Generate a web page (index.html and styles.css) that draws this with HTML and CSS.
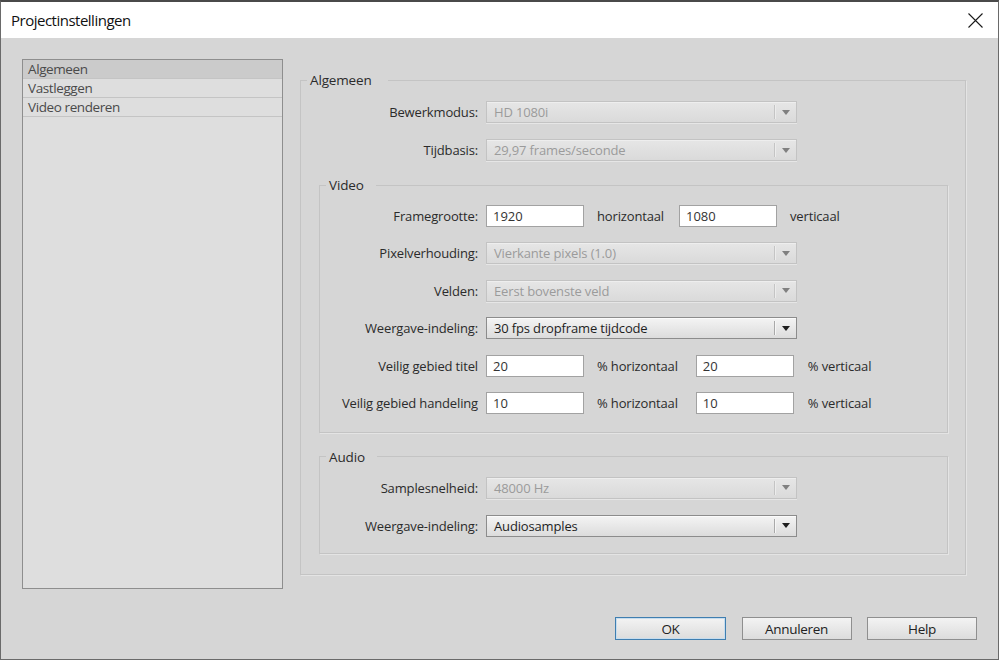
FILE: index.html
```html
<!DOCTYPE html>
<html lang="nl">
<head>
<meta charset="utf-8">
<title>Projectinstellingen</title>
<link rel="stylesheet" href="styles.css">
</head>
<body>
<div class="window">
  <div class="titlebar">
    <span class="title">Projectinstellingen</span>
    <button class="close" aria-label="Sluiten">
      <svg width="15" height="15" viewBox="0 0 15 15"><path d="M0.5 0.5 L14.5 14.5 M14.5 0.5 L0.5 14.5" stroke="#1a1a1a" stroke-width="1.1" fill="none"/></svg>
    </button>
  </div>
  <div class="body">
    <div class="content">
      <ul class="nav">
        <li class="sel">Algemeen</li>
        <li>Vastleggen</li>
        <li>Video renderen</li>
      </ul>
      <fieldset class="group main">
        <legend>Algemeen</legend>
        <div class="inner">
          <div class="rows top">
            <div class="row"><span class="lbl">Bewerkmodus:</span><div class="select disabled"><span class="val">HD 1080i</span><span class="btn"><i class="arrow"></i></span></div></div>
            <div class="row"><span class="lbl">Tijdbasis:</span><div class="select disabled"><span class="val">29,97 frames/seconde</span><span class="btn"><i class="arrow"></i></span></div></div>
          </div>
          <fieldset class="group sub video">
            <legend>Video</legend>
            <div class="sub-inner">
              <div class="rows vrows">
                <div class="row"><span class="lbl">Framegrootte:</span><input class="field" value="1920"><span class="unit">horizontaal</span><input class="field f2" value="1080"><span class="unit">verticaal</span></div>
                <div class="row"><span class="lbl">Pixelverhouding:</span><div class="select disabled"><span class="val">Vierkante pixels (1.0)</span><span class="btn"><i class="arrow"></i></span></div></div>
                <div class="row"><span class="lbl">Velden:</span><div class="select disabled"><span class="val">Eerst bovenste veld</span><span class="btn"><i class="arrow"></i></span></div></div>
                <div class="row"><span class="lbl">Weergave-indeling:</span><div class="select"><span class="val">30 fps dropframe tijdcode</span><span class="btn"><i class="arrow"></i></span></div></div>
                <div class="row"><span class="lbl">Veilig gebied titel</span><input class="field" value="20"><span class="unit">% horizontaal</span><input class="field f3" value="20"><span class="unit">% verticaal</span></div>
                <div class="row"><span class="lbl">Veilig gebied handeling</span><input class="field" value="10"><span class="unit">% horizontaal</span><input class="field f3" value="10"><span class="unit">% verticaal</span></div>
              </div>
            </div>
          </fieldset>
          <fieldset class="group sub audio">
            <legend>Audio</legend>
            <div class="sub-inner">
              <div class="rows arows">
                <div class="row"><span class="lbl">Samplesnelheid:</span><div class="select disabled"><span class="val">48000 Hz</span><span class="btn"><i class="arrow"></i></span></div></div>
                <div class="row"><span class="lbl">Weergave-indeling:</span><div class="select"><span class="val">Audiosamples</span><span class="btn"><i class="arrow"></i></span></div></div>
              </div>
            </div>
          </fieldset>
        </div>
      </fieldset>
    </div>
    <div class="buttons">
      <button class="button default">OK</button>
      <button class="button">Annuleren</button>
      <button class="button">Help</button>
    </div>
  </div>
</div>
</body>
</html>
```
FILE: styles.css
```css
* { box-sizing: border-box; }
html, body { margin: 0; padding: 0; }
body {
  width: 999px;
  height: 660px;
  overflow: hidden;
  background: #3c3c3c;
  font-family: "Open Sans", "Noto Sans", sans-serif;
  font-size: 13px;
  letter-spacing: -0.15px;
  color: #2b2b2b;
}
.window {
  width: 999px;
  height: 660px;
  border: 1px solid #6a6a6a;
  border-top: 2px solid #4a4a4a;
  background: #d6d6d6;
  display: flex;
  flex-direction: column;
}
.titlebar {
  flex: none;
  height: 36px;
  background: #fff;
  display: flex;
  align-items: center;
  justify-content: space-between;
  padding: 0 15px 0 10px;
}
.title { font-size: 15px; letter-spacing: -0.5px; color: #111; }
.close {
  border: 0;
  background: none;
  padding: 0;
  width: 15px;
  height: 15px;
  display: flex;
}
.body {
  flex: 1;
  padding: 21px 21px 0 21px;
  display: flex;
  flex-direction: column;
}
.content {
  display: flex;
  align-items: flex-start;
  gap: 17px;
  height: 530px;
}
.nav {
  flex: none;
  width: 261px;
  height: 530px;
  margin: 0;
  padding: 0;
  list-style: none;
  border: 1px solid #8e8e8e;
  background: #dedede;
}
.nav li {
  height: 19px;
  line-height: 18px;
  padding-left: 5px;
  border-bottom: 1px solid #c4c4c4;
  color: #4a4a4a;
  font-size: 13.5px;
  letter-spacing: -0.4px;
}
.nav li.sel { background: #cbcbcb; }

.group {
  margin: 0;
  padding: 0;
  min-width: 0;
  border: 1px solid #c4c4c4;
  box-shadow: 1px 1px 0 #e4e4e4;
}
.group > legend {
  margin-left: 6px;
  padding: 0 12px 0 3px;
  line-height: 18px;
  font-size: 13.5px;
  color: #2b2b2b;
}
.main {
  flex: none;
  width: 666px;
  margin-top: 12px;
}
.main > legend { padding-right: 16px; }
.inner { padding: 12px 17px 20px 18px; }
.rows { display: flex; flex-direction: column; gap: 16px; }
.vrows { gap: 15.4px; }
.arrows { gap: 15px; }
.row { display: flex; align-items: center; height: 22px; }
.lbl {
  flex: none;
  width: 159px;
  margin-right: 8px;
  text-align: right;
  white-space: nowrap;
}
.sub .lbl { width: 158px; }
.sub { margin-top: 15px; }
.sub-inner { padding: 11px 0 18px 0; }
.audio .sub-inner { padding-bottom: 16px; }

.select {
  flex: none;
  width: 311px;
  height: 22px;
  display: flex;
  align-items: center;
  border: 1px solid #8c8c8c;
  background: linear-gradient(#f4f4f4, #dcdcdc);
  box-shadow: inset 0 1px 0 #fbfbfb;
  color: #1e1e1e;
}
.select .val { flex: 1; padding-left: 7px; white-space: nowrap; }
.select .btn {
  flex: none;
  width: 22px;
  height: 100%;
  display: flex;
  align-items: center;
  justify-content: center;
  position: relative;
}
.select .btn::before {
  content: "";
  position: absolute;
  left: 0;
  top: 3px;
  bottom: 3px;
  border-left: 1px solid #a9a9a9;
  box-shadow: 1px 0 0 #f6f6f6;
}
.arrow {
  width: 0;
  height: 0;
  border-left: 4px solid transparent;
  border-right: 4px solid transparent;
  border-top: 5px solid #1f1f1f;
  margin-left: 1px;
}
.select.disabled {
  border-color: #c3c3c3;
  background: linear-gradient(#e6e6e6, #dadada);
  box-shadow: inset 0 1px 0 #eeeeee, 0 1px 0 #e6e6e6;
  color: #9b9b9b;
}
.select.disabled .btn::before { border-left-color: #c4c4c4; box-shadow: 1px 0 0 #ececec; }
.select.disabled .arrow { border-top-color: #808080; }

.field {
  flex: none;
  width: 98px;
  height: 22px;
  border: 1px solid #a2a2a2;
  background: #fff;
  padding: 0 0 0 6px;
  font: inherit;
  color: #333;
  outline: none;
}
.unit { margin-left: 13px; white-space: nowrap; }
.f2 { margin-left: 15px; }
.f3 { margin-left: 18px; }
.f3 + .unit { margin-left: 14px; }

.buttons {
  display: flex;
  justify-content: flex-end;
  gap: 15.5px;
  margin-top: 28px;
}
.button {
  width: 110px;
  height: 23px;
  border: 1px solid #8f8f8f;
  background: linear-gradient(#f3f3f3, #dcdcdc);
  font: inherit;
  font-size: 13.5px;
  letter-spacing: -0.3px;
  color: #222;
  padding: 0;
}
.button.default {
  width: 111px;
  border-color: #3f7eb0;
  box-shadow: inset 0 0 0 1px #c7ddee;
}
```
